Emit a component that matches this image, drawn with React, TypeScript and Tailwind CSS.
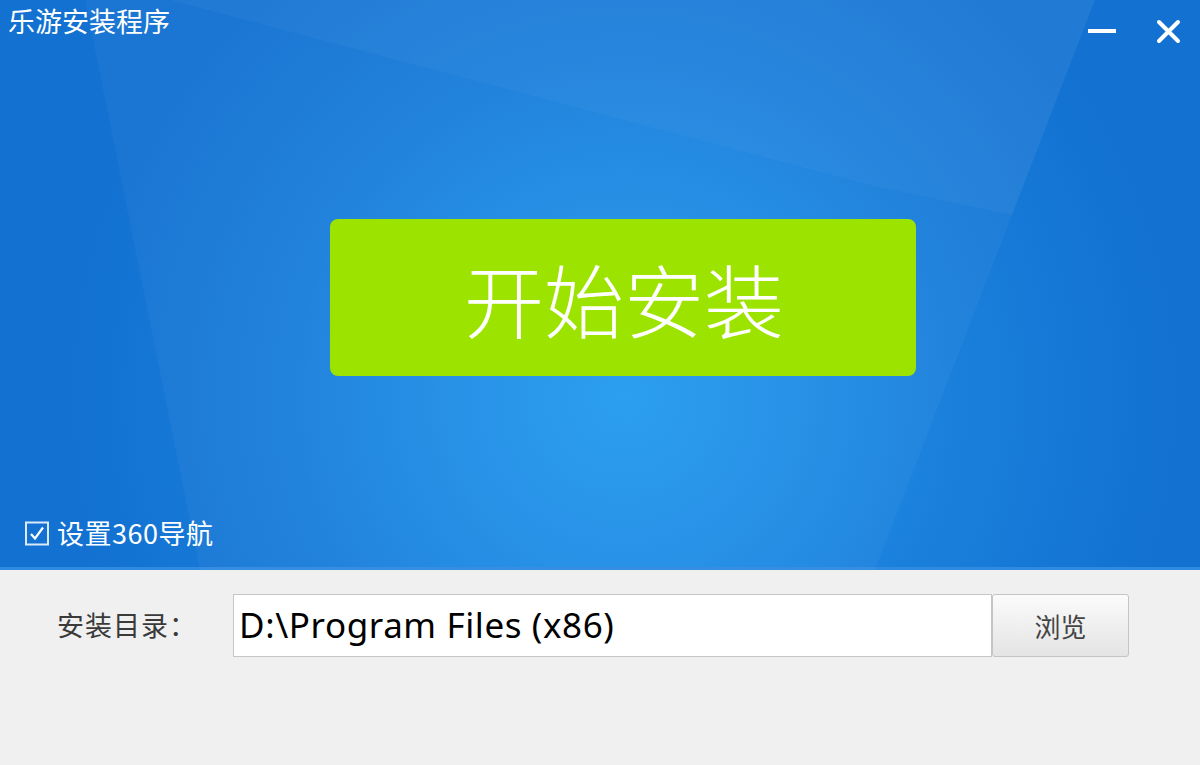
import React from "react";

const cjk = { fontFamily: '"Noto Sans CJK SC", "Noto Sans", sans-serif' };

export default function App() {
  return (
    <div className="w-[1200px] h-[765px] flex flex-col overflow-hidden" style={cjk}>
      <div className="relative h-[570px] flex flex-col bg-[radial-gradient(circle_at_52%_70%,#259cef_0%,#218fe8_22%,#1a7fdb_45%,#1271d1_75%)] border-b-[3px] border-[#2f8ae2]">
        <svg className="absolute inset-0 pointer-events-none" width="1200" height="570" viewBox="0 0 1200 570">
          <polygon points="85,0 1095,0 875,570 200,570" fill="#ffffff" fillOpacity="0.035" />
          <polygon points="170,0 1095,0 1012,215 870,185" fill="#ffffff" fillOpacity="0.03" />
        </svg>
        <div className="relative flex justify-between items-start h-[50px]">
          <div className="pl-[8px] pt-[6px] text-[27px] leading-[30px] text-white">乐游安装程序</div>
          <div className="flex items-center pt-[18px] pr-[19px] gap-[40px]">
            <svg width="28" height="26" viewBox="0 0 28 26">
              <rect x="0" y="11" width="28" height="4" fill="#ffffff" />
            </svg>
            <svg width="25" height="25" viewBox="0 0 25 25">
              <path d="M3 3 L22 22 M22 3 L3 22" stroke="#ffffff" strokeWidth="4" strokeLinecap="round" />
            </svg>
          </div>
        </div>
        <div className="relative mt-[169px] pl-[330px]">
          <div className="w-[586px] h-[157px] rounded-[8px] bg-[#9de300] flex items-center justify-center">
            <span className="text-[80px] leading-none font-light text-white pb-[2px] pl-[2px]">开始安装</span>
          </div>
        </div>
        <div className="relative mt-auto mb-[19px] pl-[25px] flex items-center gap-[8px]">
          <svg width="24" height="25" viewBox="0 0 24 25">
            <rect x="1" y="1.5" width="22" height="22" fill="none" stroke="#ffffff" strokeOpacity="0.85" strokeWidth="2" />
            <path d="M6 13 L10 17.5 L18 6.5" fill="none" stroke="#ffffff" strokeWidth="2.2" />
          </svg>
          <span className="text-[27px] leading-[30px] text-white tracking-[0.5px]">设置360导航</span>
        </div>
      </div>
      <div className="flex-1 bg-[#f0f0f0] pt-[24px]">
        <div className="flex items-center">
          <div className="w-[233px] pl-[57px] text-[27px] tracking-[1px] text-[#3a3a3a]">安装目录：</div>
          <div className="w-[759px] h-[63px] bg-white border border-[#c6c6c6] flex items-center pl-[5px]">
            <span className="text-[35px] text-black tracking-[0.6px]" style={{ fontFamily: '"Noto Sans", sans-serif' }}>D:\Program Files (x86)</span>
          </div>
          <div className="w-[137px] h-[63px] border border-[#c4c4c4] rounded-[3px] bg-[linear-gradient(#fbfbfb,#e4e4e4)] flex items-center justify-center">
            <span className="text-[26px] text-[#444444]">浏览</span>
          </div>
        </div>
      </div>
    </div>
  );
}
